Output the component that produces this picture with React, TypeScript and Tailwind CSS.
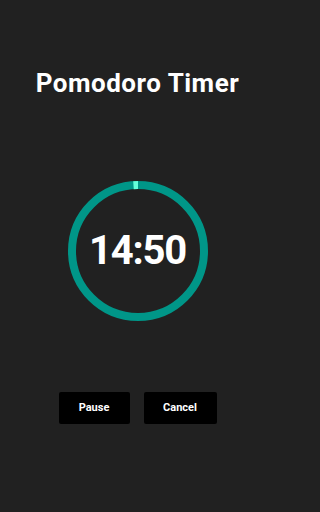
import React from "react";

const SESSION = 15 * 60;
const REMAINING = 14 * 60 + 50;

// --- Progress Ring ---
function ProgressRing({ remaining, total }: { remaining: number; total: number }) {
  const r = 66;
  const c = 2 * Math.PI * r;
  const done = (total - remaining) / total;
  return (
    <svg width="142" height="142" viewBox="0 0 142 142" className="absolute inset-0">
      <circle cx="71" cy="71" r={r} fill="none" stroke="#009688" strokeWidth="8" />
      {/* elapsed part, running counter-clockwise from the top */}
      <circle
        cx="71"
        cy="71"
        r={r}
        fill="none"
        stroke="#64ffda"
        strokeWidth="8"
        strokeDasharray={`${done * c} ${c}`}
        transform="translate(0 142) scale(1 -1) rotate(90 71 71)"
      />
    </svg>
  );
}

const formatTime = (secs: number) => {
  const m = Math.floor(secs / 60);
  const s = String(secs % 60).padStart(2, "0");
  return `${m}:${s}`;
};

export default function App() {
  return (
    <div className="min-h-screen w-full bg-[#212121] text-white font-['Roboto','Liberation_Sans',sans-serif]">
      <div className="w-[279px] min-h-screen flex flex-col items-center pr-[4px]">
        <h1 className="mt-[67px] text-[26px] leading-[32px] font-bold tracking-[0.5px]">Pomodoro Timer</h1>

        <div className="relative mt-[81px] w-[142px] h-[142px] flex items-center justify-center">
          <ProgressRing remaining={REMAINING} total={SESSION} />
          <span className="relative text-[40px] leading-none font-bold tracking-[-1.2px]">
            {formatTime(REMAINING)}
          </span>
        </div>

        <div className="mt-[70px] flex gap-[14px]">
          <button className="w-[71px] h-[32px] bg-black rounded-[2px] text-[11px] font-bold text-white">
            Pause
          </button>
          <button className="w-[73px] h-[32px] bg-black rounded-[2px] text-[11px] font-bold text-white">
            Cancel
          </button>
        </div>
      </div>
    </div>
  );
}
